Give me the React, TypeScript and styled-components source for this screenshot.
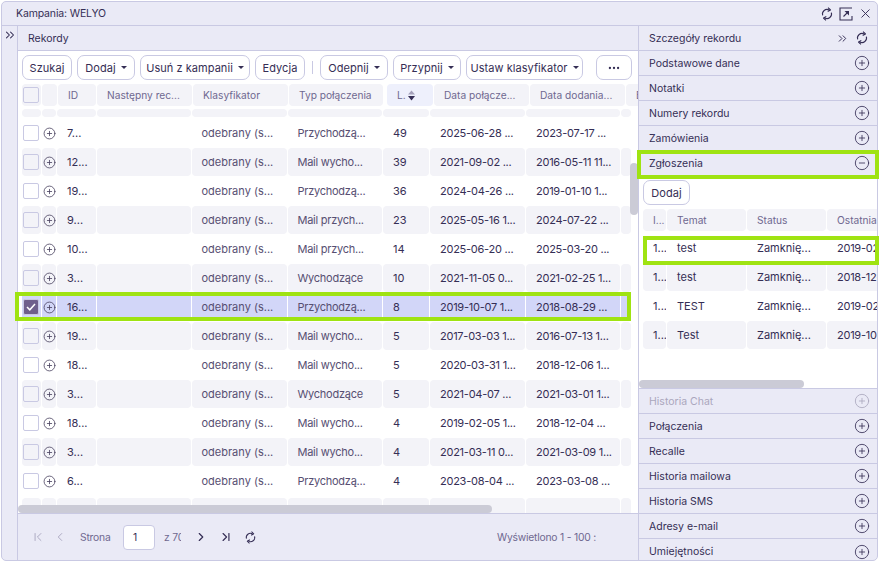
import React from "react";
import styled, { createGlobalStyle } from "styled-components";
import {
  ChevronFirst,
  ChevronLast,
  ChevronLeft,
  ChevronRight,
  ChevronsRight,
  CircleMinus,
  CirclePlus,
  Ellipsis,
  X,
} from "lucide-react";

const GlobalStyle = createGlobalStyle`
  html, body {
    margin: 0;
    padding: 0;
    background: #ffffff;
    font-family: "Inter", "Noto Sans", sans-serif;
    font-size: 11px;
    color: #352e55;
  }
`;

const Page = styled.div`
  position: relative;
  width: 879px;
  height: 562px;
  padding: 1px;
  box-sizing: border-box;
  overflow: hidden;
`;

const Window = styled.div`
  display: flex;
  flex-direction: column;
  height: 100%;
  box-sizing: border-box;
  border: 1px solid #c9c9e3;
  border-radius: 5px;
  background: #eaeaf6;
  overflow: hidden;
`;

const TitleBar = styled.div`
  display: flex;
  align-items: center;
  justify-content: space-between;
  flex: 0 0 24px;
  box-sizing: border-box;
  padding: 0 4px 0 14px;
  border-bottom: 1px solid #c9c9e3;
  font-size: 10.5px;
  letter-spacing: -0.15px;
`;

const IconRow = styled.div<{ $gap?: number; $mr?: number }>`
  display: flex;
  align-items: center;
  gap: ${(p) => p.$gap ?? 5}px;
  margin-right: ${(p) => p.$mr ?? 0}px;
  color: #352e55;
`;

const Content = styled.div`
  display: flex;
  flex: 1;
  min-height: 0;
`;

const Strip = styled.div`
  flex: 0 0 16px;
  box-sizing: border-box;
  border-right: 1px solid #c9c9e3;
  padding: 2px 0 0 1px;
  color: #352e55;
`;

const Main = styled.div`
  display: flex;
  flex-direction: column;
  flex: 0 0 620px;
  min-width: 0;
  border-right: 1px solid #c9c9e3;
`;

const PanelHead = styled.div`
  display: flex;
  align-items: center;
  justify-content: space-between;
  flex: 0 0 25px;
  box-sizing: border-box;
  padding: 0 9px 0 10px;
  border-bottom: 1px solid #c9c9e3;
  font-size: 10.5px;
`;

const Toolbar = styled.div`
  display: flex;
  align-items: center;
  flex: 0 0 31px;
  box-sizing: border-box;
  padding: 2px 0 0 4px;
  background: #ffffff;
`;

const Button = styled.div<{ $w: number; $gap?: number }>`
  display: flex;
  align-items: center;
  justify-content: center;
  gap: 5px;
  box-sizing: border-box;
  width: ${(p) => p.$w}px;
  height: 25px;
  flex: 0 0 auto;
  margin-right: ${(p) => p.$gap ?? 5}px;
  border: 1px solid #c9c9e3;
  border-radius: 7px;
  background: #ffffff;
  color: #352e55;
  white-space: nowrap;
  letter-spacing: 0.05px;
`;

const Caret = styled.span`
  width: 0;
  height: 0;
  border-left: 3px solid transparent;
  border-right: 3px solid transparent;
  border-top: 3px solid #352e55;
`;

const Separator = styled.span`
  width: 1px;
  height: 13px;
  margin: 0 7px 0 2px;
  background: #c9c9e3;
`;

const TableArea = styled.div`
  position: relative;
  flex: 1;
  min-height: 0;
  background: #ffffff;
  overflow: hidden;
  padding: 2px 0 0 4px;
`;

const GridRow = styled.div<{ $cols: string; $mt?: number }>`
  display: grid;
  grid-template-columns: ${(p) => p.$cols};
  column-gap: 1px;
  margin-top: ${(p) => p.$mt ?? 0}px;
`;

const HeadCell = styled.div<{ $active?: boolean }>`
  display: flex;
  align-items: center;
  gap: 1px;
  height: 22px;
  box-sizing: border-box;
  padding-left: 10px;
  margin-left: ${(p) => (p.$active ? 3 : 0)}px;
  border-radius: 4px;
  background: ${(p) => (p.$active ? "#eef0fc" : "#f3f3f8")};
  color: #6f6890;
  font-size: 10.2px;
  white-space: nowrap;
  overflow: hidden;
`;

const CheckHead = styled(HeadCell)`
  padding-left: 1px;
`;

const Cell = styled.div<{
  $tone: "plain" | "band" | "selected";
  $h?: number;
  $muted?: boolean;
  $tight?: boolean;
}>`
  display: flex;
  align-items: center;
  height: ${(p) => p.$h ?? 28}px;
  box-sizing: border-box;
  padding-left: ${(p) => (p.$muted ? 9.5 : 10)}px;
  border-radius: ${(p) => (p.$tone === "selected" ? 0 : 4)}px;
  background: ${(p) =>
    p.$tone === "band" ? "#f3f3f8" : p.$tone === "selected" ? "#d2d6f8" : "#ffffff"};
  color: ${(p) => (p.$muted ? "#574f72" : "#352e55")};
  letter-spacing: ${(p) => (p.$tight ? -0.25 : 0)}px;
  white-space: nowrap;
  overflow: hidden;
`;

const BoxCell = styled(Cell)`
  padding-left: 1px;
`;

const IconCell = styled(Cell)`
  justify-content: center;
  padding-left: 0;
  color: #4a4260;
`;

const Check = styled.span<{ $on?: boolean }>`
  display: flex;
  align-items: center;
  justify-content: center;
  width: 16px;
  height: 16px;
  box-sizing: border-box;
  border: 1px solid #c9c9e3;
  border-radius: 2px;
  background: ${(p) => (p.$on ? "#6f5f8c" : "transparent")};
`;

const ThumbV = styled.div`
  position: absolute;
  right: 0;
  top: 81px;
  width: 8px;
  height: 52px;
  border-radius: 4px;
  background: #cbcbd6;
`;

const ThumbH = styled.div<{ $w: number }>`
  position: absolute;
  left: 0;
  bottom: 0;
  width: ${(p) => p.$w}px;
  height: 8px;
  border-radius: 4px;
  background: #cbcbd6;
`;

const Footer = styled.div`
  display: flex;
  align-items: center;
  flex: 0 0 47px;
  box-sizing: border-box;
  padding: 0 42px 0 9px;
  border-top: 1px solid #c9c9e3;
  color: #6f6890;
  font-size: 10.3px;
  letter-spacing: -0.2px;
`;

const PagerIcon = styled.span<{ $off?: boolean; $w: number; $mr?: number }>`
  display: flex;
  justify-content: center;
  width: ${(p) => p.$w}px;
  margin-right: ${(p) => p.$mr ?? 0}px;
  color: ${(p) => (p.$off ? "#a5a1bb" : "#352e55")};
`;

const PagerLabel = styled.span`
  width: 32px;
  white-space: nowrap;
`;

const PageInput = styled.div`
  display: flex;
  align-items: center;
  box-sizing: border-box;
  width: 32px;
  height: 25px;
  margin: 0 9px 0 11px;
  padding-left: 9px;
  border: 1px solid #c9c9e3;
  border-radius: 4px;
  background: #ffffff;
  color: #352e55;
`;

const PageTotal = styled.span`
  width: 17px;
  margin-right: 9px;
  overflow: hidden;
  white-space: nowrap;
`;

const Showing = styled.span`
  margin-left: auto;
  white-space: nowrap;
  letter-spacing: -0.2px;
`;

const Detail = styled.div`
  display: flex;
  flex-direction: column;
  flex: 1;
  min-width: 0;
`;

const AccordionRow = styled.div<{ $off?: boolean; $last?: boolean }>`
  display: flex;
  align-items: center;
  justify-content: space-between;
  flex: 0 0 25px;
  box-sizing: border-box;
  padding: 0 7px 0 10px;
  border-bottom: ${(p) => (p.$last ? "none" : "1px solid #c9c9e3")};
  color: ${(p) => (p.$off ? "#aaa7bd" : "#352e55")};
  font-size: 10.5px;
`;

const DetailBody = styled.div`
  position: relative;
  flex: 0 0 213px;
  box-sizing: border-box;
  padding: 4px 0 0 4px;
  border-bottom: 1px solid #c9c9e3;
  background: #ffffff;
  overflow: hidden;
`;

const HeadSpacer = styled.div<{ $h: number }>`
  height: ${(p) => p.$h}px;
`;

const Highlight = styled.div<{ $l: number; $t: number; $w: number; $h: number }>`
  position: absolute;
  left: ${(p) => p.$l}px;
  top: ${(p) => p.$t}px;
  width: ${(p) => p.$w}px;
  height: ${(p) => p.$h}px;
  box-sizing: border-box;
  border: 4px solid #9fe312;
  pointer-events: none;
`;

const Refresh = ({ size = 14 }: { size?: number }) => (
  <svg width={size} height={size} viewBox="0 0 16 16" fill="none" stroke="currentColor" strokeWidth="1.25">
    <path d="M3 9.5A5.2 5.2 0 0 1 10.5 3.5" />
    <path d="M13 6.5A5.2 5.2 0 0 1 5.5 12.5" />
    <path d="M9.2 0.8 L12 3.4 L8.8 5.2" strokeLinejoin="round" />
    <path d="M6.8 15.2 L4 12.6 L7.2 10.8" strokeLinejoin="round" />
  </svg>
);

const Popout = () => (
  <svg width="14" height="14" viewBox="0 0 14 14" fill="none" stroke="currentColor" strokeWidth="1.1">
    <path d="M13 1H1V13H13V9" />
    <path d="M4.5 9.5L9 5" />
    <path d="M5.5 4H10V8.5Z" fill="currentColor" stroke="none" />
  </svg>
);

const SortMark = () => (
  <svg width="9" height="11" viewBox="0 0 9 11">
    <path d="M4.5 0.5L8 4.5H1Z" fill="#a5a1bb" />
    <path d="M4.5 10.5L8 6H1Z" fill="#352e55" />
  </svg>
);

const headCols = "19px 15px 38px 95px 95px 94px 49px 95px 95px 40px";
const bodyCols = "19px 14px 39px 94px 95px 94px 46px 95px 94px 9px";
const ticketCols = "23px 79px 79px 79px";

const records = [
  ["7...", "Przychodzą...", "49", "2025-06-28 ...", "2023-07-17 ..."],
  ["12...", "Mail wycho...", "39", "2021-09-02 ...", "2016-05-11 11..."],
  ["19...", "Przychodzą...", "36", "2024-04-26 ...", "2019-01-10 1..."],
  ["9...", "Mail przych...", "23", "2025-05-16 1...", "2024-07-22 ..."],
  ["10...", "Mail przych...", "14", "2025-06-20 ...", "2025-03-20 ..."],
  ["3...", "Wychodzące", "10", "2021-11-05 0...", "2021-02-25 1..."],
  ["16...", "Przychodzą...", "8", "2019-10-07 1...", "2018-08-29 ..."],
  ["19...", "Mail wycho...", "5", "2017-03-03 1...", "2016-07-13 1..."],
  ["18...", "Mail wycho...", "5", "2020-03-31 1...", "2018-12-06 1..."],
  ["3...", "Wychodzące", "5", "2021-04-07 ...", "2021-03-01 1..."],
  ["18...", "Mail wycho...", "4", "2019-02-05 1...", "2018-12-04 ..."],
  ["3...", "Mail wycho...", "4", "2021-03-11 0...", "2021-03-09 1..."],
  ["6...", "Przychodzą...", "4", "2023-08-04 ...", "2023-03-08 ..."],
];

const tickets = [
  ["1...", "test", "Zamknię...", "2019-02-"],
  ["1...", "test", "Zamknię...", "2018-12-"],
  ["1...", "TEST", "Zamknię...", "2019-02-"],
  ["1...", "Test", "Zamknię...", "2019-10-"],
];

const topSections = ["Podstawowe dane", "Notatki", "Numery rekordu", "Zamówienia"];
const bottomSections = ["Połączenia", "Recalle", "Historia mailowa", "Historia SMS", "Adresy e-mail", "Umiejętności"];

const BlankRow = ({ h, mt }: { h: number; mt: number }) => (
  <GridRow $cols={bodyCols} $mt={mt}>
    {Array.from({ length: 10 }, (_, i) => (
      <Cell key={i} $tone="band" $h={h} />
    ))}
  </GridRow>
);

export default function App() {
  return (
    <Page>
      <GlobalStyle />
      <Window>
        <TitleBar>
          <span>Kampania: WELYO</span>
          <IconRow>
            <Refresh />
            <Popout />
            <X size={15} strokeWidth={1.5} />
          </IconRow>
        </TitleBar>
        <Content>
          <Strip>
            <ChevronsRight size={14} strokeWidth={1.8} />
          </Strip>
          <Main>
            <PanelHead>
              <span>Rekordy</span>
            </PanelHead>
            <Toolbar>
              <Button $w={50}>Szukaj</Button>
              <Button $w={58}>
                <span>Dodaj</span>
                <Caret />
              </Button>
              <Button $w={110}>
                <span>Usuń z kampanii</span>
                <Caret />
              </Button>
              <Button $w={50}>Edycja</Button>
              <Separator />
              <Button $w={68}>
                <span>Odepnij</span>
                <Caret />
              </Button>
              <Button $w={68}>
                <span>Przypnij</span>
                <Caret />
              </Button>
              <Button $w={117} $gap={13}>
                <span>Ustaw klasyfikator</span>
                <Caret />
              </Button>
              <Button $w={36} $gap={0}>
                <Ellipsis size={14} />
              </Button>
            </Toolbar>
            <TableArea>
              <GridRow $cols={headCols}>
                <CheckHead>
                  <Check />
                </CheckHead>
                <HeadCell />
                <HeadCell>ID</HeadCell>
                <HeadCell>Następny rec...</HeadCell>
                <HeadCell>Klasyfikator</HeadCell>
                <HeadCell>Typ połączenia</HeadCell>
                <HeadCell $active>
                  L.
                  <SortMark />
                </HeadCell>
                <HeadCell>Data połącze...</HeadCell>
                <HeadCell>Data dodania...</HeadCell>
                <HeadCell>E</HeadCell>
              </GridRow>
              <BlankRow h={8} mt={3} />
              <HeadSpacer $h={1} />
              {records.map((r, i) => {
                const selected = i === 6;
                const tone = selected ? "selected" : i % 2 === 1 ? "band" : "plain";
                return (
                  <GridRow key={i} $cols={bodyCols} $mt={1}>
                    <BoxCell $tone={tone}>
                      <Check $on={selected}>
                        {selected && (
                          <svg width="10" height="8" viewBox="0 0 10 8" fill="none" stroke="#fff" strokeWidth="1.5">
                            <path d="M1 4l2.8 2.8L9 1" />
                          </svg>
                        )}
                      </Check>
                    </BoxCell>
                    <IconCell $tone={tone}>
                      <CirclePlus size={13} strokeWidth={1.5} />
                    </IconCell>
                    <Cell $tone={tone}>{r[0]}</Cell>
                    <Cell $tone={tone} />
                    <Cell $tone={tone} $muted>
                      odebrany (s...
                    </Cell>
                    <Cell $tone={tone} $muted $tight>
                      {r[1]}
                    </Cell>
                    <Cell $tone={tone}>{r[2]}</Cell>
                    <Cell $tone={tone} $tight>
                      {r[3]}
                    </Cell>
                    <Cell $tone={tone} $tight>
                      {r[4]}
                    </Cell>
                    <Cell $tone={tone} />
                  </GridRow>
                );
              })}
              <BlankRow h={28} mt={3} />
              <ThumbV />
              <ThumbH $w={474} />
            </TableArea>
            <Footer>
              <PagerIcon $off $w={22}>
                <ChevronFirst size={14} strokeWidth={1.5} />
              </PagerIcon>
              <PagerIcon $off $w={22} $mr={9}>
                <ChevronLeft size={14} strokeWidth={1.5} />
              </PagerIcon>
              <PagerLabel>Strona</PagerLabel>
              <PageInput>1</PageInput>
              <PageTotal>z 70</PageTotal>
              <PagerIcon $w={22}>
                <ChevronRight size={14} strokeWidth={2} />
              </PagerIcon>
              <PagerIcon $w={28}>
                <ChevronLast size={14} strokeWidth={2} />
              </PagerIcon>
              <PagerIcon $w={20}>
                <Refresh size={13} />
              </PagerIcon>
              <Showing>Wyświetlono 1 - 100 :</Showing>
            </Footer>
          </Main>
          <Detail>
            <AccordionRow>
              <span>Szczegóły rekordu</span>
              <IconRow $gap={6} $mr={1}>
                <ChevronsRight size={13} strokeWidth={1.8} />
                <Refresh />
              </IconRow>
            </AccordionRow>
            {topSections.map((s) => (
              <AccordionRow key={s}>
                <span>{s}</span>
                <CirclePlus size={16} strokeWidth={1.25} />
              </AccordionRow>
            ))}
            <AccordionRow>
              <span>Zgłoszenia</span>
              <CircleMinus size={16} strokeWidth={1.25} />
            </AccordionRow>
            <DetailBody>
              <Button $w={47}>Dodaj</Button>
              <GridRow $cols={ticketCols} $mt={4}>
                <HeadCell>I...</HeadCell>
                <HeadCell>Temat</HeadCell>
                <HeadCell>Status</HeadCell>
                <HeadCell>Ostatnia</HeadCell>
              </GridRow>
              <HeadSpacer $h={2} />
              {tickets.map((t, i) => {
                const tone = i % 2 === 1 ? "band" : "plain";
                return (
                  <GridRow key={i} $cols={ticketCols} $mt={1}>
                    <Cell $tone={tone}>{t[0]}</Cell>
                    <Cell $tone={tone}>{t[1]}</Cell>
                    <Cell $tone={tone}>{t[2]}</Cell>
                    <Cell $tone={tone} $tight>
                      {t[3]}
                    </Cell>
                  </GridRow>
                );
              })}
              <ThumbH $w={165} />
            </DetailBody>
            <AccordionRow $off>
              <span>Historia Chat</span>
              <CirclePlus size={16} strokeWidth={1.25} />
            </AccordionRow>
            {bottomSections.map((s, i) => (
              <AccordionRow key={s} $last={i === bottomSections.length - 1}>
                <span>{s}</span>
                <CirclePlus size={16} strokeWidth={1.25} />
              </AccordionRow>
            ))}
          </Detail>
        </Content>
      </Window>
      <Highlight $l={15} $t={292} $w={616} $h={29} />
      <Highlight $l={637} $t={150} $w={242} $h={29} />
      <Highlight $l={643} $t={236} $w={236} $h={29} />
    </Page>
  );
}
